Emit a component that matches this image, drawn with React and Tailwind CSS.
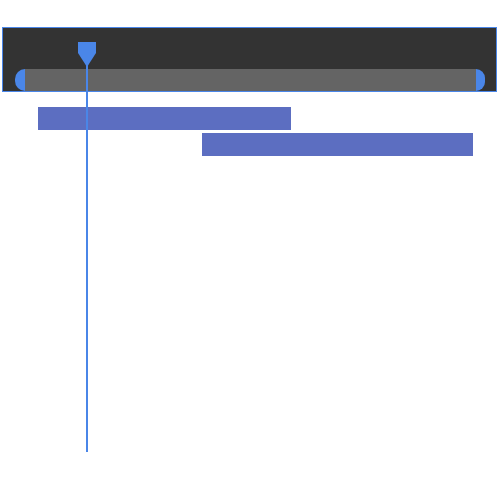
const tracks = [
  { start: 38, width: 253 },
  { start: 202, width: 271 },
];

function Playhead() {
  return (
    <div className="absolute left-[77px] top-[42px] w-[20px] h-[411px] pointer-events-none">
      <svg width="20" height="411" viewBox="0 0 20 411">
        <rect x="9" y="20" width="2" height="390" fill="#4a86e8" />
        <path d="M1 0 H19 V11 L10 25 L1 11 Z" fill="#4a86e8" />
      </svg>
    </div>
  );
}

export default function App() {
  return (
    <div className="relative w-[500px] h-[500px] bg-white overflow-hidden">
      <div className="ml-[2px] mt-[27px] w-[495px] h-[65px] border border-[#4a86e8] bg-[#333333] pt-[41px] pl-[12px]">
        <div className="flex h-[22px] w-[470px]">
          <div className="w-[10px] h-full bg-[#4a86e8] rounded-l-full" />
          <div className="flex-1 h-full bg-[#646464]" />
          <div className="w-[9px] h-full bg-[#4a86e8] rounded-r-full" />
        </div>
      </div>

      <div className="mt-[15px] flex flex-col gap-[3px]">
        {tracks.map((t, i) => (
          <div key={i} className="h-[23px]">
            <div
              className="h-full bg-[#5c6ec1]"
              style={{ marginLeft: t.start, width: t.width }}
            />
          </div>
        ))}
      </div>

      <Playhead />
    </div>
  );
}
